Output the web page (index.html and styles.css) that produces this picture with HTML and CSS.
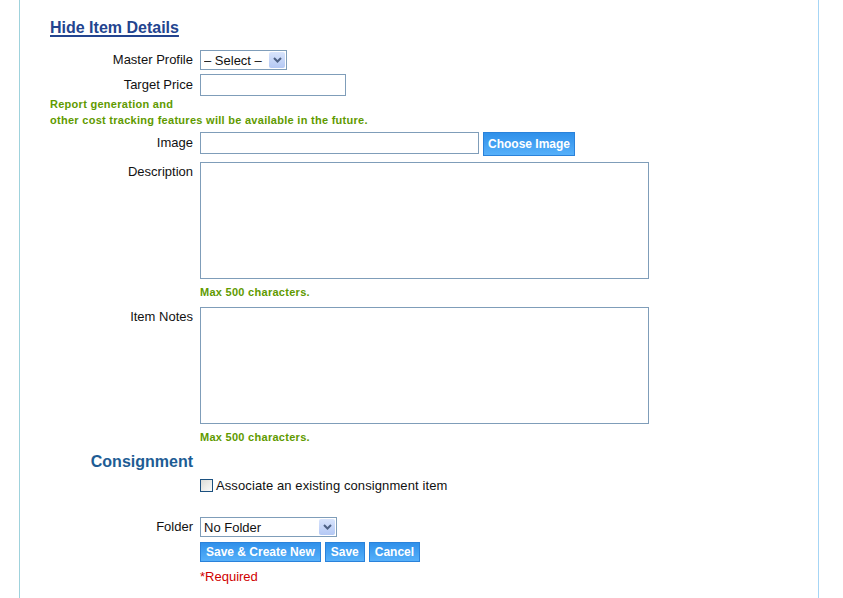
FILE: index.html
```html
<!DOCTYPE html>
<html lang="en">
<head>
    <meta charset="UTF-8">
    <meta name="viewport" content="width=device-width, initial-scale=1.0">
    <title>Item Details</title>
    <link rel="stylesheet" href="styles.css">
</head>
<body>
    <div class="page">
        <form class="item-form">
            <h2 class="toggle"><a href="#">Hide Item Details</a></h2>

            <div class="row row-profile">
                <label>Master Profile</label>
                <div class="select-wrap profile-select">
                    <select><option>&ndash; Select &ndash;</option></select>
                    <span class="arrow">
                        <svg width="9" height="6" viewBox="0 0 9 6"><path d="M1 1 L4.5 4.5 L8 1" fill="none" stroke="#4d6185" stroke-width="2"/></svg>
                    </span>
                </div>
            </div>

            <div class="row row-price">
                <label>Target Price</label>
                <div><input type="text" class="text-input price-input"></div>
            </div>

            <p class="note cost-note">Report generation and<br>other cost tracking features will be available in the future.</p>

            <div class="row row-image">
                <label>Image</label>
                <div class="image-field">
                    <input type="text" class="text-input image-input">
                    <button type="button" class="btn btn-choose">Choose Image</button>
                </div>
            </div>

            <div class="row row-area">
                <label>Description</label>
                <div>
                    <textarea></textarea>
                    <p class="note max-note">Max 500 characters.</p>
                </div>
            </div>

            <div class="row row-area row-notes">
                <label>Item Notes</label>
                <div>
                    <textarea></textarea>
                    <p class="note max-note">Max 500 characters.</p>
                </div>
            </div>

            <div class="row row-section">
                <h3>Consignment</h3>
                <div></div>
            </div>

            <div class="row row-check">
                <span></span>
                <label class="check-label"><input type="checkbox"> Associate an existing consignment item</label>
            </div>

            <div class="row row-folder">
                <label>Folder</label>
                <div class="select-wrap folder-select">
                    <select><option>No Folder</option></select>
                    <span class="arrow">
                        <svg width="9" height="6" viewBox="0 0 9 6"><path d="M1 1 L4.5 4.5 L8 1" fill="none" stroke="#4d6185" stroke-width="2"/></svg>
                    </span>
                </div>
            </div>

            <div class="row row-actions">
                <span></span>
                <div class="actions">
                    <button type="button" class="btn">Save &amp; Create New</button>
                    <button type="button" class="btn">Save</button>
                    <button type="button" class="btn">Cancel</button>
                </div>
            </div>

            <div class="row row-required">
                <span></span>
                <p class="required">*Required</p>
            </div>
        </form>
    </div>
</body>
</html>
```

FILE: styles.css
```css
body, h2, h3, p {
    margin: 0;
    padding: 0;
}
body {
    font-family: 'Liberation Sans', Arial, sans-serif;
    font-size: 13px;
    color: #111;
    background-color: #fff;
}
.page {
    margin-left: 19px;
    width: 800px;
    min-height: 598px;
    border-left: 1px solid #9fd2dc;
    border-right: 1px solid #a6d5f5;
    padding: 18px 0 0 30px;
    box-sizing: border-box;
}
.toggle {
    font-size: 16px;
    line-height: 20px;
    font-weight: bold;
}
.toggle a {
    color: #23448f;
    text-decoration: underline;
    text-decoration-thickness: 2px;
    text-underline-offset: 2px;
}
.row {
    display: grid;
    grid-template-columns: 143px auto;
    column-gap: 7px;
}
.row > label {
    text-align: right;
    line-height: 20px;
}
.row-profile {
    margin-top: 12px;
}
.row-price {
    margin-top: 4px;
}
.row-price > label {
    line-height: 22px;
}
.text-input {
    height: 22px;
    box-sizing: border-box;
    border: 1px solid #7f9db9;
    padding: 2px 4px;
    font: inherit;
    display: block;
}
.price-input {
    width: 146px;
}
.note {
    color: #5f9a00;
    font-size: 11px;
    font-weight: bold;
    letter-spacing: 0.28px;
}
.cost-note {
    line-height: 16px;
}
.row-image {
    margin-top: 4px;
}
.row-image > label {
    line-height: 22px;
}
.image-field {
    display: flex;
    align-items: flex-start;
    gap: 4px;
}
.image-input {
    width: 279px;
}
.btn {
    font-family: 'Liberation Sans', Arial, sans-serif;
    font-size: 12px;
    font-weight: bold;
    color: #fff;
    height: 20px;
    padding: 0 5px;
    border: 1px solid #2a82da;
    background: linear-gradient(#2f90ea, #56b0fa);
    cursor: pointer;
    line-height: 18px;
}
.btn-choose {
    height: 24px;
    padding: 0 4px;
}
.row-area {
    margin-top: 6px;
}
.row-area > label {
    line-height: 20px;
}
.row-notes {
    margin-top: 8px;
}
textarea {
    display: block;
    width: 449px;
    height: 117px;
    box-sizing: border-box;
    border: 1px solid #7f9db9;
    resize: none;
    font: inherit;
}
.max-note {
    margin-top: 6px;
    line-height: 14px;
}
.row-section {
    margin-top: 8px;
}
.row-section h3 {
    text-align: right;
    color: #1d5c94;
    font-size: 16px;
    font-weight: bold;
    line-height: 20px;
}
.row-check {
    margin-top: 4px;
}
.check-label {
    display: flex;
    align-items: center;
    gap: 3px;
    line-height: 18px;
    letter-spacing: 0.1px;
}
.check-label input {
    appearance: none;
    -webkit-appearance: none;
    margin: 0 0 2px 0;
    width: 13px;
    height: 13px;
    border: 1px solid #1c5180;
    background: linear-gradient(135deg, #dcdcd7, #fbfbf9);
    box-sizing: border-box;
}
.select-wrap {
    position: relative;
    height: 20px;
}
.select-wrap select {
    appearance: none;
    -webkit-appearance: none;
    height: 20px;
    width: 100%;
    box-sizing: border-box;
    border: 1px solid #7f9db9;
    background-color: #fff;
    font: inherit;
    color: #111;
    padding: 0 0 0 3px;
    border-radius: 0;
}
.select-wrap .arrow {
    position: absolute;
    top: 2px;
    right: 2px;
    width: 16px;
    height: 16px;
    background: linear-gradient(#d8e4fc, #b4c8f4);
    border-radius: 2px;
    display: flex;
    align-items: center;
    justify-content: center;
}
.profile-select {
    width: 87px;
}
.folder-select {
    width: 137px;
}
.row-folder {
    margin-top: 21px;
}
.row-actions {
    margin-top: 5px;
}
.actions {
    display: flex;
    gap: 4px;
}
.row-required {
    margin-top: 8px;
}
.required {
    color: #d00000;
    font-size: 13px;
    line-height: 14px;
}
```
